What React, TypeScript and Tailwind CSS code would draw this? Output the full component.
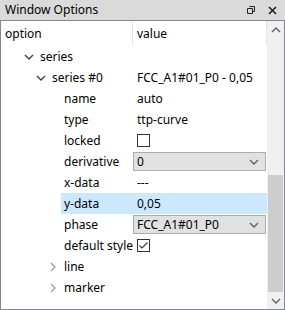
import React from 'react';

interface Row {
  label: string;
  indent: number;
  arrow?: 'down' | 'right';
  value?: string;
  kind?: 'text' | 'check' | 'combo';
  checked?: boolean;
  selected?: boolean;
}

// indent = x where the (highlightable) label box starts, minus the 1px border
const rows: Row[] = [
  { label: 'series', indent: 36, arrow: 'down' },
  { label: 'series #0', indent: 48, arrow: 'down', value: 'FCC_A1#01_P0 - 0,05' },
  { label: 'name', indent: 60, value: 'auto' },
  { label: 'type', indent: 60, value: 'ttp-curve' },
  { label: 'locked', indent: 60, kind: 'check' },
  { label: 'derivative', indent: 60, kind: 'combo', value: '0' },
  { label: 'x-data', indent: 60, value: '---' },
  { label: 'y-data', indent: 60, value: '0,05', selected: true },
  { label: 'phase', indent: 60, kind: 'combo', value: 'FCC_A1#01_P0' },
  { label: 'default style', indent: 60, kind: 'check', checked: true },
  { label: 'line', indent: 60, arrow: 'right' },
  { label: 'marker', indent: 60, arrow: 'right' },
];

const Chevron: React.FC<{ dir: 'down' | 'right' | 'up'; color?: string }> = ({ dir, color = '#404040' }) => {
  const d =
    dir === 'down' ? 'M1 3 L5 7 L9 3' : dir === 'up' ? 'M1 7 L5 3 L9 7' : 'M3 1 L7 5 L3 9';
  return (
    <svg width="10" height="10" viewBox="0 0 10 10">
      <path d={d} fill="none" stroke={color} strokeWidth="1.4" />
    </svg>
  );
};

const ValueCell: React.FC<{ row: Row }> = ({ row }) => {
  if (row.kind === 'check') {
    return (
      <div className="pl-[4px] flex items-center h-full">
        <div className="w-[13px] h-[13px] border border-[#333] bg-white flex items-center justify-center">
          {row.checked && (
            <svg width="11" height="11" viewBox="0 0 11 11">
              <path d="M1.5 5.5 L4 8 L9.5 2.5" fill="none" stroke="#333" strokeWidth="1.1" />
            </svg>
          )}
        </div>
      </div>
    );
  }
  if (row.kind === 'combo') {
    return (
      <div className="h-full py-[1px] pr-[1px]">
        <div className="h-full bg-[#e1e1e1] border border-[#adadad] flex items-center justify-between pl-[3px] pr-[6px]">
          <span>{row.value}</span>
          <Chevron dir="down" color="#606060" />
        </div>
      </div>
    );
  }
  return <div className="pl-[4px] flex items-center h-full">{row.value}</div>;
};

const App: React.FC = () => {
  return (
    <div
      className="w-[285px] h-[310px] flex flex-col bg-[#dadada] text-[12px] text-black"
      style={{ fontFamily: '"Noto Sans", "Liberation Sans", sans-serif' }}
    >
      {/* title bar */}
      <div className="h-[20px] flex items-center justify-between pl-[5px] pr-[8px] shrink-0">
        <span>Window Options</span>
        <div className="flex items-center gap-[13px]">
          <svg width="8" height="8" viewBox="0 0 8 8">
            <path d="M2.5 0.5 H7.5 V5.5 H5.5 M0.5 2.5 H5.5 V7.5 H0.5 Z" fill="none" stroke="#222" strokeWidth="1" />
          </svg>
          <svg width="9" height="9" viewBox="0 0 9 9">
            <path d="M1 1 L8 8 M8 1 L1 8" stroke="#222" strokeWidth="1.6" />
          </svg>
        </div>
      </div>

      {/* tree body */}
      <div className="flex-1 flex border border-[#828790] bg-white min-h-0">
        <div className="flex-1 flex flex-col">
          {/* header */}
          <div className="h-[25px] flex border-r border-[#e5e5e5]">
            <div className="w-[132px] pl-[4px] flex items-center border-r border-[#e5e5e5]">option</div>
            <div className="flex-1 pl-[4px] flex items-center">value</div>
          </div>
          {rows.map((row) => (
            <div key={row.label} className="h-[21px] flex">
              <div className="w-[132px] flex items-center" style={{ paddingLeft: row.indent }}>
                {row.arrow && (
                  <span className="w-[13px] -ml-[13px] flex items-center">
                    <Chevron dir={row.arrow} color={row.arrow === 'down' ? '#404040' : '#a0a0a0'} />
                  </span>
                )}
                <span
                  className={`flex-1 h-full flex items-center pl-[3px] whitespace-nowrap ${
                    row.selected ? 'bg-[#cce8ff]' : ''
                  }`}
                >
                  {row.label}
                </span>
              </div>
              <div className={`flex-1 ${row.selected ? 'bg-[#cce8ff]' : ''}`}>
                {row.value || row.kind ? <ValueCell row={row} /> : null}
              </div>
            </div>
          ))}
        </div>

        {/* scrollbar */}
        <div className="w-[17px] bg-[#f0f0f0] flex flex-col items-center">
          <div className="h-[17px] w-full flex items-center justify-center">
            <Chevron dir="up" color="#606060" />
          </div>
          <div className="flex-1 w-full px-[1px] flex flex-col">
            <div className="h-[137px]" />
            <div className="flex-1 bg-[#cdcdcd]" />
          </div>
          <div className="h-[17px] w-full flex items-center justify-center">
            <Chevron dir="down" color="#606060" />
          </div>
        </div>
      </div>
    </div>
  );
};

export default App;
